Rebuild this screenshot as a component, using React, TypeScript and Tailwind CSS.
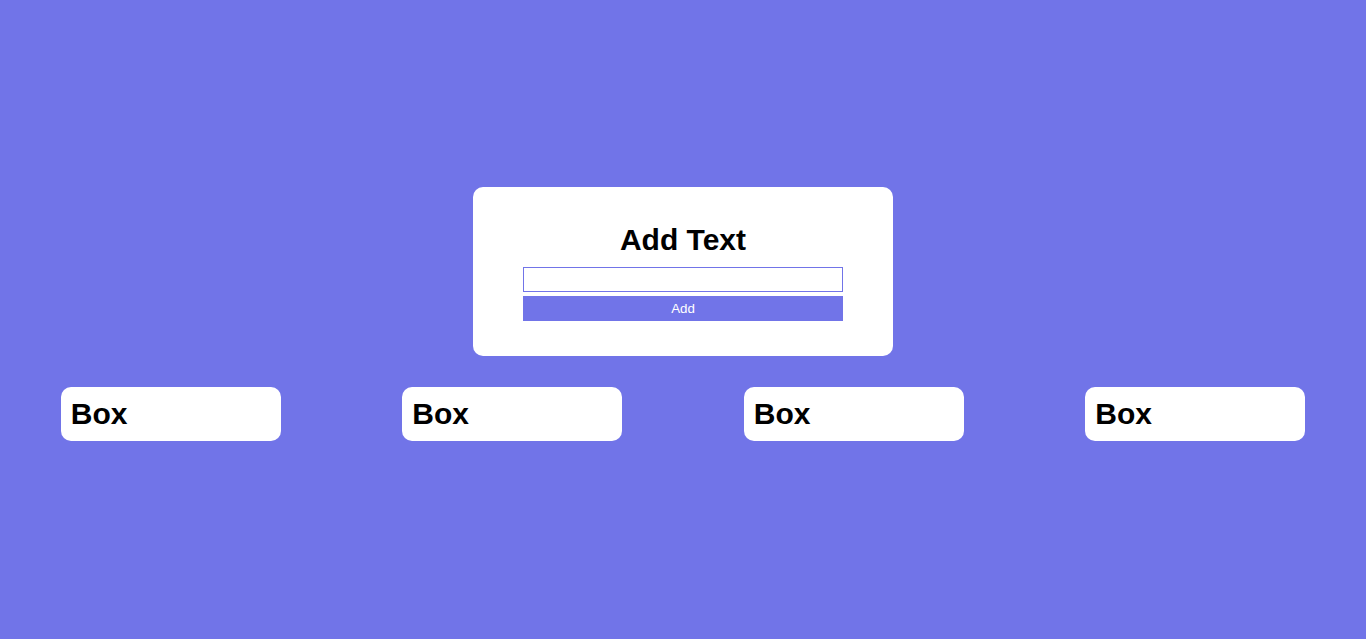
import React from "react";

export default function App() {
  return (
    <div
      className="min-h-[639px] w-full bg-[#7174e8] pt-[187px]"
      style={{ fontFamily: '"Liberation Sans", Arial, sans-serif' }}
    >
      <div className="flex justify-center">
        <div className="w-[420px] rounded-[10px] bg-white px-[50px] pt-[36px] pb-[35px]">
          <h1 className="text-center text-[30px] font-bold leading-[34px] text-black">Add Text</h1>
          <input
            type="text"
            className="mt-[10px] block h-[25px] w-[320px] border border-[#7174e8] bg-white px-1 text-[13px] outline-none"
          />
          <button className="mt-[4px] block h-[25px] w-[320px] bg-[#7174e8] text-[13.33px] text-white">
            Add
          </button>
        </div>
      </div>
      <div className="mt-[31px] flex justify-around">
        {[0, 1, 2, 3].map((i) => (
          <div key={i} className="h-[54px] w-[220px] rounded-[10px] bg-white px-[10px] py-[10px]">
            <h2 className="text-[30px] font-bold leading-[34px] text-black">Box</h2>
          </div>
        ))}
      </div>
    </div>
  );
}
